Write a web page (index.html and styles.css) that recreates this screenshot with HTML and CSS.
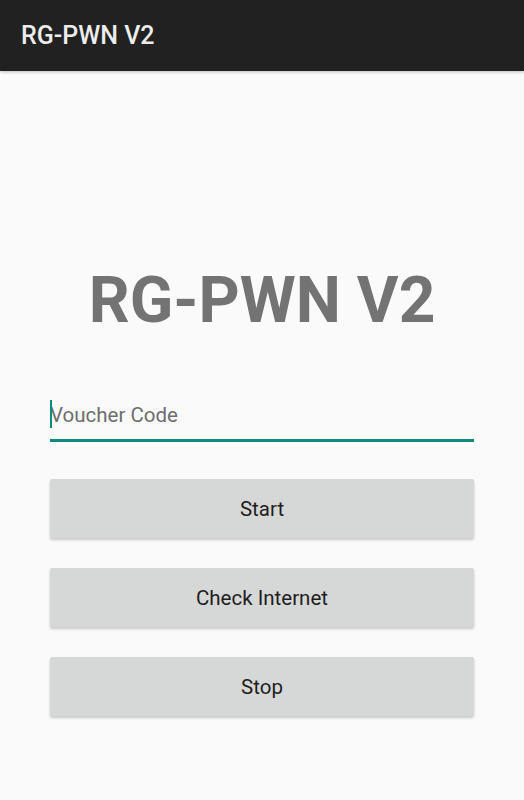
FILE: index.html
```html
<!DOCTYPE html>
<html>
<head>
<meta charset="utf-8">
<link rel="stylesheet" href="styles.css">
</head>
<body>
<header class="appbar">
  <span class="appbar-title">RG-PWN V2</span>
</header>
<main class="content">
  <h1 class="title">RG-PWN V2</h1>
  <div class="field">
    <span class="cursor"></span>
    <span class="placeholder">Voucher Code</span>
  </div>
  <div class="buttons">
    <button class="btn">Start</button>
    <button class="btn">Check Internet</button>
    <button class="btn">Stop</button>
  </div>
</main>
</body>
</html>
```
FILE: styles.css
```css
html, body {
  margin: 0;
  padding: 0;
  background: #fafafa;
  font-family: Roboto, "Liberation Sans", sans-serif;
}
.appbar {
  height: 71px;
  background: #212121;
  display: flex;
  align-items: center;
  padding-left: 21px;
  box-shadow: 0 1px 3px rgba(0,0,0,0.25);
}
.appbar-title {
  color: #ececec;
  font-size: 25px;
  font-weight: 500;
}
.content {
  padding: 0 50px 40px;
  display: flex;
  flex-direction: column;
}
.title {
  margin: 198px 0 0 0;
  text-align: center;
  font-size: 64px;
  line-height: 64px;
  font-weight: 700;
  color: #737373;
}
.field {
  margin-top: 67px;
  height: 39px;
  border-bottom: 3px solid #0f8a80;
  display: flex;
  align-items: flex-start;
  position: relative;
}
.cursor {
  position: absolute;
  left: 0;
  top: 0;
  width: 2px;
  height: 28px;
  background: #0f8a80;
}
.placeholder {
  font-size: 20.5px;
  line-height: 30px;
  color: #6e6e6e;
}
.buttons {
  margin-top: 37px;
  display: flex;
  flex-direction: column;
  gap: 30px;
}
.btn {
  height: 59px;
  border: none;
  border-radius: 2px;
  background: #d6d7d7;
  font-family: Roboto, "Liberation Sans", sans-serif;
  font-size: 20.5px;
  color: #1e1e1e;
  box-shadow: 0 2px 3px rgba(0,0,0,0.2);
  padding: 0;
}
```
